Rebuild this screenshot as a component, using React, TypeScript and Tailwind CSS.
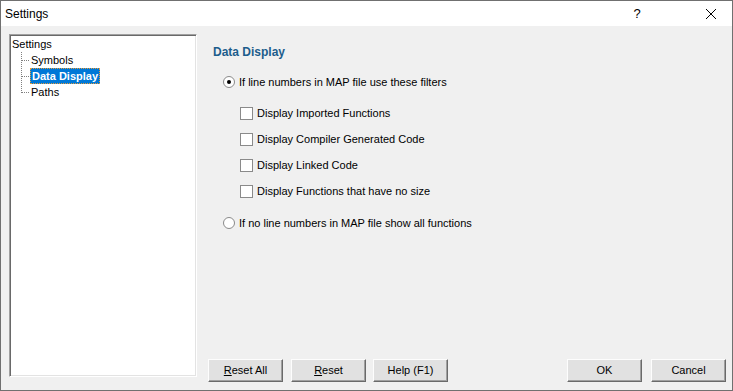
import React from "react";

const font = { fontFamily: '"Liberation Sans", Arial, sans-serif' };

function Radio({ checked }: { checked?: boolean }) {
	return (
		<span className="relative inline-block w-[12px] h-[12px] rounded-full border border-[#8a8a8a] bg-white shrink-0">
			{checked && <span className="absolute left-[3px] top-[3px] w-[4px] h-[4px] rounded-full bg-black" />}
		</span>
	);
}

function Check() {
	return <span className="inline-block w-[13px] h-[13px] border border-[#8a8a8a] bg-white shrink-0" />;
}

function Btn({ label, u, className = "" }: { label: string; u?: number; className?: string }) {
	return (
		<div
			className={`w-[75px] h-[23px] flex items-center justify-center bg-[#e1e1e1] border border-t-[#fdfdfd] border-l-[#fdfdfd] border-r-[#6a6a6a] border-b-[#6a6a6a] text-[11px] text-black shadow-[inset_-1px_-1px_0_#a0a0a0] ${className}`}
		>
			{u === undefined ? (
				label
			) : (
				<span>
					{label.slice(0, u)}
					<span className="underline">{label[u]}</span>
					{label.slice(u + 1)}
				</span>
			)}
		</div>
	);
}

export default function App() {
	return (
		<div className="w-[733px] h-[391px] border border-[#707070] bg-[#f0f0f0] flex flex-col" style={font}>
			<div className="h-[25px] bg-white flex items-center shrink-0">
				<span className="pl-[4px] text-[12px] text-black flex-1">Settings</span>
				<span className="w-[20px] text-center text-[13px] text-black mr-[58px]">?</span>
				<svg width="12" height="12" viewBox="0 0 12 12" className="mr-[15px]">
					<path d="M1 1 L11 11 M11 1 L1 11" stroke="#000" strokeWidth="1" />
				</svg>
			</div>
			<div className="flex flex-1 pl-[8px] pt-[8px] pb-[8px]">
				<div className="w-[188px] h-[343px] bg-white border border-t-[#a0a0a0] border-l-[#a0a0a0] border-r-white border-b-white shadow-[inset_1px_1px_0_#696969,inset_-1px_-1px_0_#e3e3e3] relative text-[11px] text-black">
					<div className="absolute left-[2px] top-[1px] leading-[16px]">Settings</div>
					<div className="absolute left-[11px] top-[17px] h-[41px] border-l border-dotted border-[#808080]" />
					{["Symbols", "Data Display", "Paths"].map((t, i) => (
						<div key={t} className="absolute left-[11px] flex items-center" style={{ top: 17 + i * 16 }}>
							<span className="w-[8px] border-t border-dotted border-[#808080]" />
							{i === 1 ? (
								<span className="ml-[1px] px-[1px] h-[16px] leading-[14px] font-bold bg-[#0078d7] text-white border border-dotted border-[#e59c3c]">
									{t}
								</span>
							) : (
								<span className="ml-[2px] leading-[16px]">{t}</span>
							)}
						</div>
					))}
				</div>
				<div className="flex-1 flex flex-col">
					<div className="flex-1 pl-[16px] pt-[10px] text-[11px] text-black">
						<div className="font-bold text-[#1c5d8c] text-[12px] leading-[16px]">Data Display</div>
						<div className="flex items-center gap-[4px] mt-[14px] ml-[10px] h-[16px]">
							<Radio checked />
							<span>If line numbers in MAP file use these filters</span>
						</div>
						<div className="ml-[27px] mt-[15px] flex flex-col gap-[10px]">
							{[
								"Display Imported Functions",
								"Display Compiler Generated Code",
								"Display Linked Code",
								"Display Functions that have no size",
							].map((t) => (
								<div key={t} className="flex items-center gap-[4px] h-[16px]">
									<Check />
									<span>{t}</span>
								</div>
							))}
						</div>
						<div className="flex items-center gap-[4px] mt-[16px] ml-[10px] h-[16px]">
							<Radio />
							<span>If no line numbers in MAP file show all functions</span>
						</div>
					</div>
					<div className="flex justify-between pl-[11px] pr-[6px]">
						<div className="flex">
							<Btn label="Reset All" u={0} />
							<Btn label="Reset" u={0} className="ml-[8px]" />
							<Btn label="Help (F1)" className="ml-[7px]" />
						</div>
						<div className="flex gap-[9px]">
							<Btn label="OK" />
							<Btn label="Cancel" />
						</div>
					</div>
				</div>
			</div>
		</div>
	);
}
